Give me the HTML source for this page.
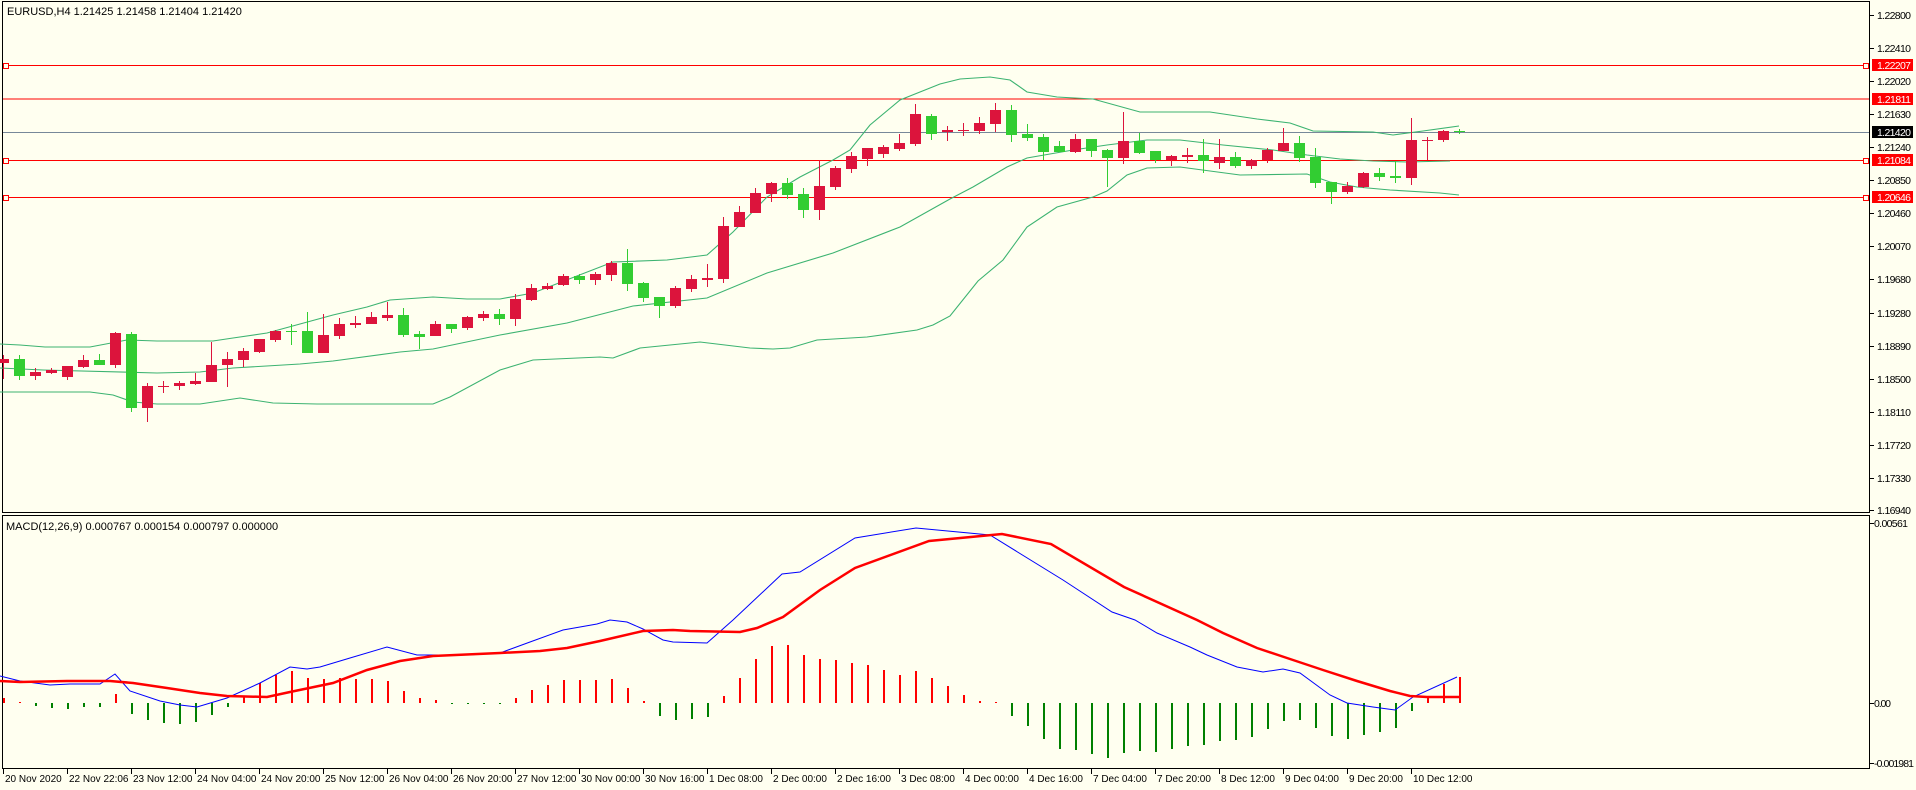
<!DOCTYPE html>
<html><head><meta charset="utf-8"><style>
html,body{margin:0;padding:0;background:#fffff0;width:1916px;height:790px;overflow:hidden}
svg{display:block;font-family:"Liberation Sans",sans-serif}
</style></head><body>
<svg id="s" width="1916" height="790" xmlns="http://www.w3.org/2000/svg" shape-rendering="crispEdges">
<rect width="1916" height="790" fill="#fffff0"/>
<rect x="2.5" y="1.5" width="1867" height="511" fill="none" stroke="#000"/>
<rect x="2.5" y="515.5" width="1867" height="253" fill="none" stroke="#000"/>
<text x="7" y="15" font-size="11" fill="#000">EURUSD,H4  1.21425 1.21458 1.21404 1.21420</text>
<text x="6" y="530" font-size="11" fill="#000">MACD(12,26,9) 0.000767 0.000154 0.000797 0.000000</text>
<g id="g"></g>
</svg>
<script>
var g=document.getElementById('g'),h='';
function line(x1,y1,x2,y2,c,w){h+='<line x1="'+x1+'" y1="'+y1+'" x2="'+x2+'" y2="'+y2+'" stroke="'+c+'" stroke-width="'+(w||1)+'"/>';}
function poly(p,c,w){h+='<polyline fill="none" stroke="'+c+'" stroke-width="'+w+'" shape-rendering="auto" points="'+p+'"/>';}
[[65,'#ff0000',1],[98.5,'#ff0000',0],[160,'#ff0000',1],[197,'#ff0000',1]].forEach(function(l){line(3,l[0]+.5,1869,l[0]+.5,l[1]);if(l[2]){h+='<rect x="3.5" y="'+(l[0]-2+.5)+'" width="5" height="5" fill="#fffff0" stroke="#ff0000"/><rect x="1863.5" y="'+(l[0]-2+.5)+'" width="5" height="5" fill="#fffff0" stroke="#ff0000"/>';}});
line(3,132.5,1869,132.5,'#778899');
var BC='#3cb371';
poly("0,344 20,345 45,347 90,347 127,340 157,341 213,341 233,338 267,333 300,324 333,315 367,307 390,300 433,297 467,299 500,299 533,293 613,262 667,260 707,255 733,232 767,197 800,177 833,160 850,150 870,125 900,100 940,84 960,79 990,77 1010,80 1027,92 1057,97 1093,99 1140,112 1210,112 1257,119 1290,123 1313,131 1373,132 1393,135 1423,131 1459,126",BC,1.1);
poly("0,368 43,370 157,373 200,372 233,368 300,364 333,361 400,352 433,349 500,335 567,323 633,306 707,298 767,273 833,253 900,227 950,199 973,187 1007,167 1027,158 1073,150 1107,145 1147,140 1180,140 1223,145 1273,150 1307,155 1340,159 1373,161 1407,162 1450,161",BC,1.1);
poly("0,392 90,392 113,395 133,402 157,404 200,404 240,398 273,403 317,404 433,404 450,397 500,370 533,360 600,357 613,358 640,348 700,342 750,348 773,349 790,348 817,340 867,337 917,330 933,325 950,316 978,281 1003,260 1027,227 1057,207 1093,197 1107,191 1127,175 1147,168 1180,167 1240,175 1307,174 1330,182 1357,187 1390,190 1440,193 1459,195",BC,1.1);
var C="3 r 359 363 355 379|19 g 359 376 355 380|35 r 372 376 368 380|51 r 370 373 368 374|67 r 366 377 366 380|83 r 360 367 355 368|99 g 360 365 354 365|115 r 333 365 332 368|131 g 334 408 332 412|147 r 386 408 383 422|163 r 386 386 381 393|179 r 383 386 381 390|195 r 381 384 373 385|211 r 365 382 342 382|227 r 359 365 352 387|243 r 351 360 348 367|259 r 339 352 339 353|275 r 331 340 330 342|291 g 331 331 324 345|307 g 331 353 312 353|323 r 335 353 314 353|339 r 324 336 318 339|355 r 323 325 316 328|371 r 317 324 312 324|387 r 315 318 302 321|403 g 315 335 308 337|419 g 334 337 331 349|435 r 324 336 321 336|451 g 324 329 324 333|467 r 317 328 316 330|483 r 314 318 311 321|499 g 314 319 309 325|515 r 299 319 294 326|531 r 288 300 284 301|547 r 286 289 283 290|563 r 276 285 274 286|579 g 276 280 274 284|595 r 274 280 272 285|611 r 263 275 261 281|627 g 263 284 249 291|643 g 283 298 282 302|659 g 297 306 297 318|675 r 288 306 286 308|691 r 279 289 275 292|707 r 278 280 264 287|723 r 226 279 217 283|739 r 212 227 206 227|755 r 193 213 188 213|771 r 183 194 182 202|787 g 183 195 178 199|803 g 194 210 188 218|819 r 186 210 160 220|835 r 168 187 166 190|851 r 156 169 152 173|867 r 148 159 148 166|883 r 147 154 145 158|899 r 143 149 134 151|915 r 114 144 104 146|931 g 116 134 114 140|947 r 130 132 126 141|963 r 130 130 123 136|979 r 123 131 117 134|995 r 110 124 103 132|1011 g 110 135 105 142|1027 g 134 138 124 141|1043 g 137 152 134 160|1059 g 146 152 141 152|1075 r 139 152 134 153|1091 g 139 151 139 157|1107 g 150 158 149 187|1123 r 141 158 112 164|1139 g 141 153 133 154|1155 g 151 160 151 163|1171 r 156 160 155 166|1187 r 155 157 148 163|1203 g 155 161 139 173|1219 r 157 163 139 169|1235 g 157 166 152 168|1251 r 160 166 159 169|1267 r 150 160 148 163|1283 r 143 151 128 151|1299 g 143 158 136 162|1315 g 157 183 148 188|1331 g 182 192 182 204|1347 r 186 192 182 194|1363 r 173 187 172 188|1379 g 173 177 168 181|1395 g 176 178 161 183|1411 r 140 178 118 185|1427 r 140 140 137 160|1443 r 131 140 130 142|1459 g 131 132 129 134";
C.split('|').forEach(function(s){var a=s.split(' '),x=+a[0],c=a[1]=='r'?'#dc143c':'#32cd32',t=+a[2],b=+a[3],hi=+a[4],lo=+a[5];
line(x+.5,hi,x+.5,lo,c);
if(b-t<1){line(x-5,t+.5,x+6,t+.5,c);}else{h+='<rect x="'+(x-5)+'" y="'+t+'" width="11" height="'+(b-t)+'" fill="'+c+'"/>';}});
var H="3:698,19:702,35:706,51:708,67:709,83:707,99:707,115:694,131:714,147:720,163:723,179:724,195:722,211:715,227:707,243:696,259:683,275:675,291:671,307:678,323:679,339:678,355:679,371:679,387:681,403:691,419:698,435:700,451:704,467:704,483:704,499:704,515:698,531:690,547:685,563:680,579:680,595:680,611:679,627:688,643:701,659:716,675:720,691:719,707:717,723:696,739:678,755:659,771:646,787:645,803:655,819:659,835:660,851:663,867:665,883:670,899:675,915:671,931:678,947:686,963:695,979:701,995:702,1011:716,1027:726,1043:739,1059:749,1075:750,1091:754,1107:758,1123:753,1139:751,1155:752,1171:749,1187:746,1203:745,1219:741,1235:740,1251:737,1267:729,1283:721,1299:720,1315:728,1331:736,1347:739,1363:735,1379:732,1395:728,1411:711,1427:697,1443:684,1459:677";
H.split(',').forEach(function(s){var a=s.split(':'),x=+a[0],t=+a[1];
if(t<703){h+='<rect x="'+x+'" y="'+t+'" width="2" height="'+(703-t)+'" fill="#ff0000"/>';}else{h+='<rect x="'+x+'" y="703" width="2" height="'+Math.max(1,t-703)+'" fill="#008000"/>';}});
poly("0,676 20,681 50,685 70,684 100,684 115,674 130,691 160,701 180,705 197,707 227,698 260,683 290,667 307,669 320,667 350,658 387,647 417,655 467,655 500,653 530,642 563,630 597,624 610,620 627,622 643,629 663,640 673,642 707,643 733,620 782,574 800,572 855,538 916,528 990,535 1063,580 1112,612 1135,620 1157,633 1190,647 1207,655 1237,667 1263,672 1283,669 1300,673 1330,695 1347,703 1373,707 1395,710 1413,697 1457,677","#0000ff",1);
poly("0,681 20,682 67,681 110,681 133,683 167,688 200,693 227,696 267,697 290,692 333,683 367,670 400,661 433,656 500,653 540,651 567,648 600,641 643,631 673,630 690,631 740,632 757,628 783,617 820,590 855,568 929,541 1002,534 1051,544 1124,587 1197,620 1223,633 1257,648 1290,659 1323,670 1357,681 1390,691 1410,696 1427,697 1459,697","#ff0000",2.5);
var P=[["1.22800",15],["1.22410",48],["1.22020",81],["1.21630",114],["1.21240",147],["1.20850",180],["1.20460",213],["1.20070",246],["1.19680",279],["1.19280",313],["1.18890",346],["1.18500",379],["1.18110",412],["1.17720",445],["1.17330",478],["1.16940",510]];
P.forEach(function(p){line(1870,p[1]+.5,1874,p[1]+.5,'#000');h+='<text x="1877" y="'+(p[1]+4)+'" font-size="10.5" textLength="34" fill="#000">'+p[0]+'</text>';});
[["1.22207",65,'#ff0000'],["1.21811",98.5,'#ff0000'],["1.21420",132,'#000'],["1.21084",160,'#ff0000'],["1.20646",197,'#ff0000']].forEach(function(p){
h+='<rect x="1872" y="'+Math.round(p[1]-6)+'" width="41" height="12" fill="'+p[2]+'"/><text x="1877" y="'+Math.round(p[1]+4)+'" font-size="10.5" textLength="34" fill="#fff">'+p[0]+'</text>';});
[["0.00561",523,34],["0.00",703,17],["-0.001981",763,40]].forEach(function(p){line(1870,p[1]+.5,1874,p[1]+.5,'#000');h+='<text x="1874" y="'+(p[1]+4)+'" font-size="10.5" textLength="'+p[2]+'" fill="#000">'+p[0]+'</text>';});
var D=["20 Nov 2020","22 Nov 22:06","23 Nov 12:00","24 Nov 04:00","24 Nov 20:00","25 Nov 12:00","26 Nov 04:00","26 Nov 20:00","27 Nov 12:00","30 Nov 00:00","30 Nov 16:00","1 Dec 08:00","2 Dec 00:00","2 Dec 16:00","3 Dec 08:00","4 Dec 00:00","4 Dec 16:00","7 Dec 04:00","7 Dec 20:00","8 Dec 12:00","9 Dec 04:00","9 Dec 20:00","10 Dec 12:00"];
D.forEach(function(d,i){var x=3+64*i;line(x+.5,769,x+.5,774,'#000');h+='<text x="'+(x+2)+'" y="782" font-size="10" fill="#000">'+d+'</text>';});
g.innerHTML=h;
</script>
</body></html>
